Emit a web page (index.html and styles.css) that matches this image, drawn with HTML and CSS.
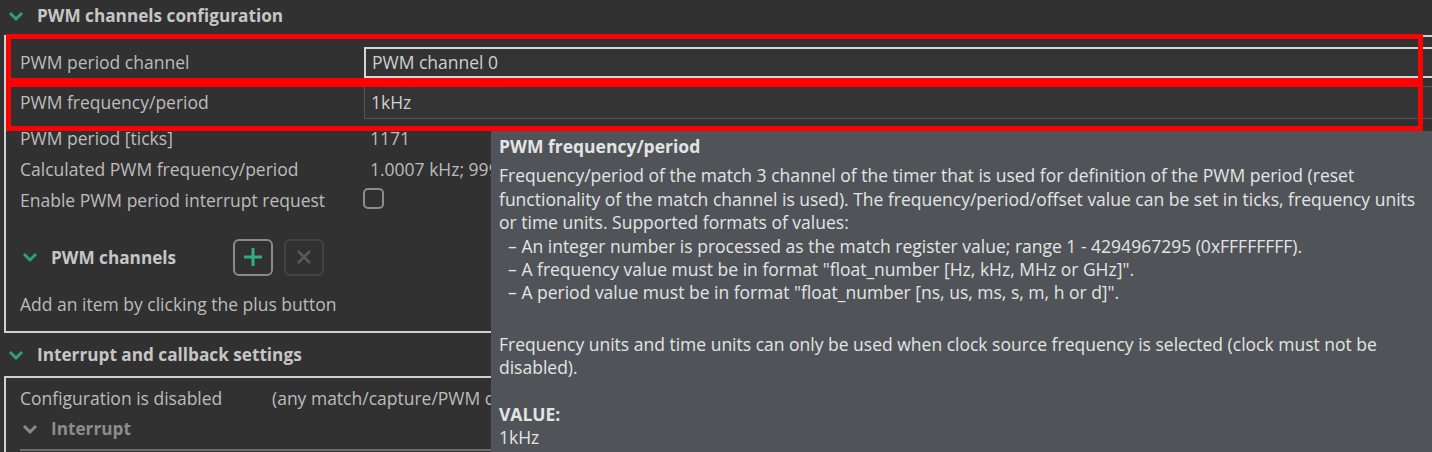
FILE: index.html
```html
<!DOCTYPE html>
<html>
<head>
<meta charset="utf-8">
<link rel="stylesheet" href="styles.css">
</head>
<body>
<div class="page">
  <div class="sec-head">
    <svg class="chev" width="16" height="12" viewBox="0 0 16 12"><polyline points="2,3 8,9 14,3" fill="none" stroke="#2f9e82" stroke-width="3"/></svg>
    <span>PWM channels configuration</span>
  </div>
  <div class="panel">
    <div class="row row-input">
      <div class="label">PWM period channel</div>
      <div class="field field-active">PWM channel 0</div>
    </div>
    <div class="row row-input2">
      <div class="label">PWM frequency/period</div>
      <div class="field field-plain">1kHz</div>
    </div>
    <div class="row">
      <div class="label">PWM period [ticks]</div>
      <div class="value">1171</div>
    </div>
    <div class="row">
      <div class="label">Calculated PWM frequency/period</div>
      <div class="value">1.0007 kHz; 999.3 us</div>
    </div>
    <div class="row">
      <div class="label">Enable PWM period interrupt request</div>
      <div class="value"><span class="checkbox"></span></div>
    </div>
    <div class="sub-head">
      <div class="sub-title">
        <svg class="chev" width="16" height="12" viewBox="0 0 16 12"><polyline points="2,3 8,9 14,3" fill="none" stroke="#2f9e82" stroke-width="3"/></svg>
        <span>PWM channels</span>
      </div>
      <button class="btn btn-add"><svg width="22" height="22" viewBox="0 0 22 22"><path d="M11 2v18M2 11h18" stroke="#2fae88" stroke-width="3"/></svg></button>
      <button class="btn btn-del"><svg width="18" height="18" viewBox="0 0 18 18"><path d="M3 3l12 12M15 3L3 15" stroke="#5a5a5a" stroke-width="2.6"/></svg></button>
    </div>
    <div class="row hint">Add an item by clicking the plus button</div>
  </div>
  <div class="sec-head sec-head2">
    <svg class="chev" width="16" height="12" viewBox="0 0 16 12"><polyline points="2,3 8,9 14,3" fill="none" stroke="#2f9e82" stroke-width="3"/></svg>
    <span>Interrupt and callback settings</span>
  </div>
  <div class="panel panel2">
    <div class="row">
      <div class="label label-short">Configuration is disabled</div>
      <div class="value">(any match/capture/PWM channel must be enabled)</div>
    </div>
    <div class="sub-head sub-head-dis">
      <div class="sub-title">
        <svg class="chev" width="16" height="12" viewBox="0 0 16 12"><polyline points="2,3 8,9 14,3" fill="none" stroke="#8a8a8a" stroke-width="3"/></svg>
        <span>Interrupt</span>
      </div>
    </div>
    <div class="inner-box"></div>
  </div>

  <div class="annot annot1"></div>
  <div class="annot annot2"></div>

  <div class="tooltip">
    <div class="tt-title">PWM frequency/period</div>
    <div class="tt-para">
      <div class="tt-line">Frequency/period of the match 3 channel of the timer that is used for definition of the PWM period (reset</div>
      <div class="tt-line">functionality of the match channel is used). The frequency/period/offset value can be set in ticks, frequency units</div>
      <div class="tt-line">or time units. Supported formats of values:</div>
      <div class="tt-line">&nbsp; – An integer number is processed as the match register value; range 1 - 4294967295 (0xFFFFFFFF).</div>
      <div class="tt-line">&nbsp; – A frequency value must be in format "float_number [Hz, kHz, MHz or GHz]".</div>
      <div class="tt-line">&nbsp; – A period value must be in format "float_number [ns, us, ms, s, m, h or d]".</div>
    </div>
    <div class="tt-para tt-gap">
      <div class="tt-line">Frequency units and time units can only be used when clock source frequency is selected (clock must not be</div>
      <div class="tt-line">disabled).</div>
    </div>
    <div class="tt-para tt-gap2">
      <div class="tt-line tt-bold">VALUE:</div>
      <div class="tt-line">1kHz</div>
    </div>
  </div>
</div>
</body>
</html>
```
FILE: styles.css
```css
html, body {
  margin: 0;
  padding: 0;
}
body {
  background: #313131;
  font-family: "Open Sans", "Noto Sans", sans-serif;
  font-size: 17.5px;
  color: #bcbcbc;
  width: 1432px;
  height: 452px;
  overflow: hidden;
}
.page {
  position: relative;
  display: flex;
  flex-direction: column;
  height: 452px;
  overflow: hidden;
}
.sec-head {
  box-sizing: border-box;
  height: 35px;
  padding-bottom: 4px;
  display: flex;
  align-items: center;
  padding-left: 8px;
  gap: 13px;
  font-weight: 700;
  font-size: 17.2px;
  color: #c6c6c6;
  flex-shrink: 0;
}
.sec-head .chev { margin-top: 1px; }
.sec-head2 {
  height: 43px;
  padding-bottom: 0;
}
.panel {
  margin-left: 4px;
  border: 2px solid #cfcfcf;
  border-right: none;
  padding-top: 5px;
  padding-bottom: 11px;
  display: flex;
  flex-direction: column;
  flex-shrink: 0;
}
.row {
  display: grid;
  grid-template-columns: 344px 1fr;
  align-items: center;
  height: 31px;
  padding-left: 14px;
  white-space: nowrap;
}
.row-input {
  height: 40px;
}
.row-input2 {
  height: 40px;
}
.field {
  box-sizing: border-box;
  display: flex;
  align-items: center;
  padding-left: 6px;
  color: #d0d0d0;
}
.field-active {
  height: 31px;
  border: 2px solid #d6d6d6;
  border-right: none;
  background: #333333;
}
.field-plain {
  height: 33px;
  border: 1px solid #575757;
  border-right: none;
  background: #343434;
}
.value {
  padding-left: 6px;
  display: flex;
  align-items: center;
}
.checkbox {
  display: inline-block;
  box-sizing: border-box;
  width: 21px;
  height: 21px;
  border: 2px solid #8c8c8c;
  border-radius: 5px;
  margin-left: -7px;
  margin-top: -3px;
}
.sub-head {
  display: flex;
  align-items: center;
  height: 40px;
  margin-top: 22px;
  padding-left: 16px;
}
.sub-title {
  width: 211px;
  display: flex;
  align-items: center;
  gap: 13px;
  font-weight: 700;
  font-size: 17.2px;
  color: #c6c6c6;
}
.btn {
  box-sizing: border-box;
  width: 40px;
  height: 37px;
  margin-right: 11px;
  background: transparent;
  border-radius: 6px;
  display: flex;
  align-items: center;
  justify-content: center;
  padding: 0;
}
.btn-add {
  border: 2px solid #8a8a8a;
}
.btn-del {
  border: 2px solid #434343;
}
.hint {
  display: block;
  line-height: 31px;
  margin-top: 12px;
}
.panel2 {
  padding-top: 4px;
  padding-bottom: 0;
  border-bottom: none;
  flex-grow: 1;
}
.label-short {
  width: 252px;
}
.panel2 .row {
  grid-template-columns: 252px 1fr;
}
.panel2 .value {
  padding-left: 0;
}
.sub-head-dis {
  margin-top: 0;
  height: 31px;
}
.sub-head-dis .sub-title {
  color: #8c8c8c;
}
.inner-box {
  margin-left: 14px;
  margin-top: 5px;
  border-top: 2px solid #6a6a6a;
  flex-grow: 1;
}
.annot {
  position: absolute;
  box-sizing: border-box;
  border: 5px solid #ff0000;
  pointer-events: none;
}
.annot1 {
  left: 6px;
  top: 34px;
  width: 1417px;
  height: 49px;
}
.annot2 {
  left: 6px;
  top: 82px;
  width: 1417px;
  height: 49px;
}
.tooltip {
  position: absolute;
  left: 491px;
  top: 131px;
  right: 0;
  bottom: -20px;
  background: #505458;
  color: #e4e4e4;
  padding: 4px 0 0 8px;
  line-height: 23.4px;
}
.tt-title {
  font-weight: 700;
  margin-bottom: 6px;
}
.tt-line {
  white-space: pre;
}
.tt-gap {
  margin-top: 28px;
}
.tt-gap2 {
  margin-top: 23px;
}
.tt-bold {
  font-weight: 700;
}
```
